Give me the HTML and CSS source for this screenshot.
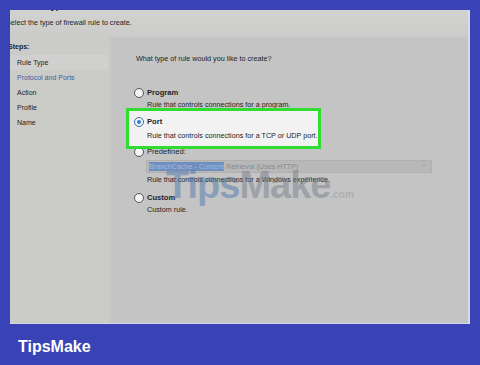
FILE: index.html
```html
<!DOCTYPE html>
<html lang="en">

<head>
	<meta charset="UTF-8">
	<title>New Inbound Rule Wizard</title>
	<link rel="stylesheet" href="styles.css">
</head>

<body>

	<div class="window">
		<div class="header">
			<div class="title">Rule Type</div>
			<div class="subtitle">Select the type of firewall rule to create.</div>
		</div>

		<div class="main">
			<div class="sidebar">
				<div class="steps">Steps:</div>
				<div class="step current">Rule Type</div>
				<div class="step active">Protocol and Ports</div>
				<div class="step">Action</div>
				<div class="step">Profile</div>
				<div class="step">Name</div>
			</div>

			<div class="content">
				<p class="question">What type of rule would you like to create?</p>

				<div class="option">
					<span class="radio"></span>
					<div class="option-text">
						<div class="label">Program</div>
						<div class="desc">Rule that controls connections for a program.</div>
					</div>
				</div>

				<div class="option highlight">
					<span class="radio checked"></span>
					<div class="option-text">
						<div class="label">Port</div>
						<div class="desc">Rule that controls connections for a TCP or UDP port.</div>
					</div>
				</div>

				<div class="option predefined">
					<span class="radio"></span>
					<div class="option-text">
						<div class="label">Predefined:</div>
						<div class="select"><span class="sel">BranchCache - Content</span> Retrieval (Uses HTTP)<span class="arrow">&#8964;</span></div>
						<div class="desc">Rule that controls connections for a Windows experience.</div>
					</div>
				</div>

				<div class="option custom">
					<span class="radio"></span>
					<div class="option-text">
						<div class="label">Custom</div>
						<div class="desc">Custom rule.</div>
					</div>
				</div>

				<div class="watermark"><span class="wm-tips">Tips</span>Make<span class="dotcom">.com</span></div>
			</div>
		</div>
	</div>

	<div class="brand">TipsMake</div>

</body>

</html>
```

FILE: styles.css
```css
body {
	margin: 0;
	width: 480px;
	height: 365px;
	overflow: hidden;
	background-color: #3a43b6;
	font-family: 'Liberation Sans', Arial, sans-serif;
	color: #1e1e1e;
}

.window {
	margin: 10px 10px 0 10px;
	height: 314px;
	box-sizing: border-box;
	background-color: #c4c4c4;
	border-right: 2px solid #d8dcf0;
	border-bottom: 1px solid #d4d6e8;
	display: flex;
	flex-direction: column;
	overflow: hidden;
}

.header {
	height: 27px;
	flex-shrink: 0;
	background: linear-gradient(#d2d2d0, #cbcbca);
	font-size: 7.2px;
}

.title {
	font-weight: bold;
	font-size: 9px;
	margin: -10px 0 0 14px;
	line-height: 12px;
}

.subtitle {
	margin: 5px 0 0 -4px;
	line-height: 12px;
	white-space: nowrap;
}

.main {
	flex: 1;
	display: flex;
}

.sidebar {
	width: 100px;
	flex-shrink: 0;
	background-color: #cbcbc8;
	border-right: 2px solid #c6c6c4;
	font-size: 7px;
	padding-top: 4px;
}

.steps {
	font-weight: bold;
	margin-left: -2px;
	line-height: 12px;
}

.step {
	line-height: 15px;
	padding-left: 7px;
	margin-right: 2px;
}

.step.current {
	margin-top: 2px;
	background-color: #d0d0ce;
}

.step.active {
	color: #3f5fa0;
}

.content {
	flex: 1;
	position: relative;
	font-size: 7.2px;
	padding-left: 22px;
}

.question {
	margin: 16px 0 22px 2px;
	line-height: 12px;
}

.option {
	display: flex;
	gap: 3px;
	line-height: 12px;
	white-space: nowrap;
}

.radio {
	width: 8px;
	height: 8px;
	margin-top: 1px;
	border: 1px solid #555;
	border-radius: 50%;
	background-color: #f4f4f4;
	flex-shrink: 0;
	display: flex;
	align-items: center;
	justify-content: center;
}

.radio.checked {
	border-color: #3a6fb0;
}

.radio.checked::after {
	content: '';
	width: 4px;
	height: 4px;
	border-radius: 50%;
	background-color: #2f7fd6;
}

.label {
	font-weight: bold;
	font-size: 7.6px;
}

.highlight {
	position: relative;
	z-index: 2;
	width: 195px;
	box-sizing: border-box;
	margin: -3px 0 -3px -8px;
	padding: 5px 0 4px 5px;
	border: 3px solid #30dc30;
	background-color: #f2f2f2;
}

.highlight .desc {
	margin-top: 2px;
}

.predefined .label {
	font-weight: normal;
}

.select {
	position: relative;
	width: 286px;
	height: 13px;
	margin: 2px 0 1px -1px;
	background-color: #b8b8b8;
	border: 1px solid #b0b0b0;
	color: #8a8a8a;
	line-height: 12px;
	padding-left: 2px;
	box-sizing: border-box;
}

.sel {
	background-color: #6f8fc0;
	color: #a8b8d4;
}

.arrow {
	position: absolute;
	right: 4px;
	top: -3px;
	color: #999;
}

.custom {
	margin-top: 6px;
}

.watermark {
	position: absolute;
	left: 54px;
	top: 127px;
	font-size: 38px;
	font-weight: bold;
	letter-spacing: -1px;
	color: rgba(120, 128, 140, 0.5);
	pointer-events: none;
}

.wm-tips {
	color: rgba(80, 120, 170, 0.5);
}

.dotcom {
	font-size: 10px;
	letter-spacing: 0;
	color: rgba(150, 155, 160, 0.5);
}

.brand {
	margin: 14px 0 0 18px;
	font-size: 16px;
	font-weight: bold;
	color: #fff;
}
```
